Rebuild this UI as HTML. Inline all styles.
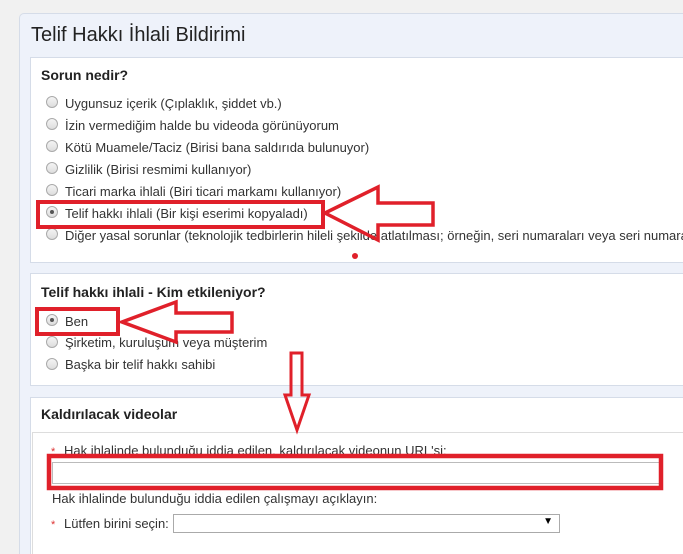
<!DOCTYPE html>
<html><head><meta charset="utf-8"><style>
*{margin:0;padding:0;box-sizing:border-box}
html,body{width:683px;height:554px;overflow:hidden}
body{background:#f1f1f1;font-family:"Liberation Sans",Arial,sans-serif;color:#333;position:relative}
.outer{position:absolute;left:19px;top:13px;width:664px;height:541px;background:#eef2fa;border:1px solid #d5dce8;border-right:none;border-bottom:none;border-radius:5px 0 0 0}
h1{position:absolute;left:31px;top:24px;font-size:20px;font-weight:normal;color:#222}
.box{position:absolute;left:30px;width:653px;background:#fff;border:1px solid #d5dce8;border-right:none}
.t{position:absolute;font-size:14px;white-space:nowrap}
.b{font-weight:bold;color:#222}
.r{position:absolute;width:12px;height:12px;border-radius:50%;border:1px solid #aaa;background:linear-gradient(#f4f4f4,#ddd)}
.r.on::after{content:"";position:absolute;left:3px;top:3px;width:4px;height:4px;border-radius:50%;background:#555}
.s{font-size:13px;color:#333}
.ast{position:absolute;color:#d33;font-size:11px}
</style></head><body>
<div class="outer"></div>
<h1>Telif Hakkı İhlali Bildirimi</h1>
<div class="box" style="top:57px;height:206px"></div>
<div class="box" style="top:273px;height:113px"></div>
<div class="box" style="top:397px;height:157px;border-bottom:none"></div>
<div class="box" style="left:32px;width:651px;top:432px;height:122px;border-color:#ddd;border-bottom:none"></div>

<div class="t b" style="left:41px;top:67px">Sorun nedir?</div>
<div class="r" style="left:46px;top:96px"></div><div class="t s" style="left:65px;top:96px">Uygunsuz içerik (Çıplaklık, şiddet vb.)</div>
<div class="r" style="left:46px;top:118px"></div><div class="t s" style="left:65px;top:118px">İzin vermediğim halde bu videoda görünüyorum</div>
<div class="r" style="left:46px;top:140px"></div><div class="t s" style="left:65px;top:140px">Kötü Muamele/Taciz (Birisi bana saldırıda bulunuyor)</div>
<div class="r" style="left:46px;top:162px"></div><div class="t s" style="left:65px;top:162px">Gizlilik (Birisi resmimi kullanıyor)</div>
<div class="r" style="left:46px;top:184px"></div><div class="t s" style="left:65px;top:184px">Ticari marka ihlali (Biri ticari markamı kullanıyor)</div>
<div class="r on" style="left:46px;top:206px"></div><div class="t s" style="left:65px;top:206px">Telif hakkı ihlali (Bir kişi eserimi kopyaladı)</div>
<div class="r" style="left:46px;top:228px"></div><div class="t s" style="left:65px;top:228px;width:618px;overflow:hidden">Diğer yasal sorunlar (teknolojik tedbirlerin hileli şekilde atlatılması; örneğin, seri numaraları veya seri numara</div>

<div class="t b" style="left:41px;top:284px">Telif hakkı ihlali - Kim etkileniyor?</div>
<div class="r on" style="left:46px;top:314px"></div><div class="t s" style="left:65px;top:314px">Ben</div>
<div class="r" style="left:46px;top:336px"></div><div class="t s" style="left:65px;top:335px">Şirketim, kuruluşum veya müşterim</div>
<div class="r" style="left:46px;top:358px"></div><div class="t s" style="left:65px;top:357px">Başka bir telif hakkı sahibi</div>

<div class="t b" style="left:41px;top:406px">Kaldırılacak videolar</div>
<div class="ast" style="left:51px;top:446px">*</div><div class="t s" style="left:64px;top:443px">Hak ihlalinde bulunduğu iddia edilen, kaldırılacak videonun URL'si:</div>
<div style="position:absolute;left:52px;top:462px;width:608px;height:22px;border:1px solid #bbb;background:#fff"></div>
<div class="t s" style="left:52px;top:491px">Hak ihlalinde bulunduğu iddia edilen çalışmayı açıklayın:</div>
<div class="ast" style="left:51px;top:519px">*</div><div class="t s" style="left:64px;top:516px">Lütfen birini seçin:</div>
<div style="position:absolute;left:173px;top:514px;width:387px;height:19px;border:1px solid #aaa;background:#fff"><span style="position:absolute;right:6px;top:1px;font-size:10px;color:#000">▼</span></div>

<svg width="683" height="554" style="position:absolute;left:0;top:0" fill="none" stroke="#e0202a" stroke-width="4">
<rect x="38" y="202" width="285" height="25"/>
<path d="M325 213 L378 187 L378 203 L433 203 L433 225 L378 225 L378 240 Z" stroke-width="3.5"/>
<circle cx="355" cy="256" r="3" fill="#e0202a" stroke="none"/>
<rect x="37" y="309" width="81" height="25"/>
<path d="M122 322 L176 302 L176 313 L232 313 L232 332 L176 332 L176 342 Z" stroke-width="3.5"/>
<path d="M291 353 L302 353 L302 395 L309 395 L297 430 L285 395 L291 395 Z" stroke-width="3"/>
<rect x="49" y="456" width="612" height="32" stroke-width="4.5"/>
</svg>
</body></html>
